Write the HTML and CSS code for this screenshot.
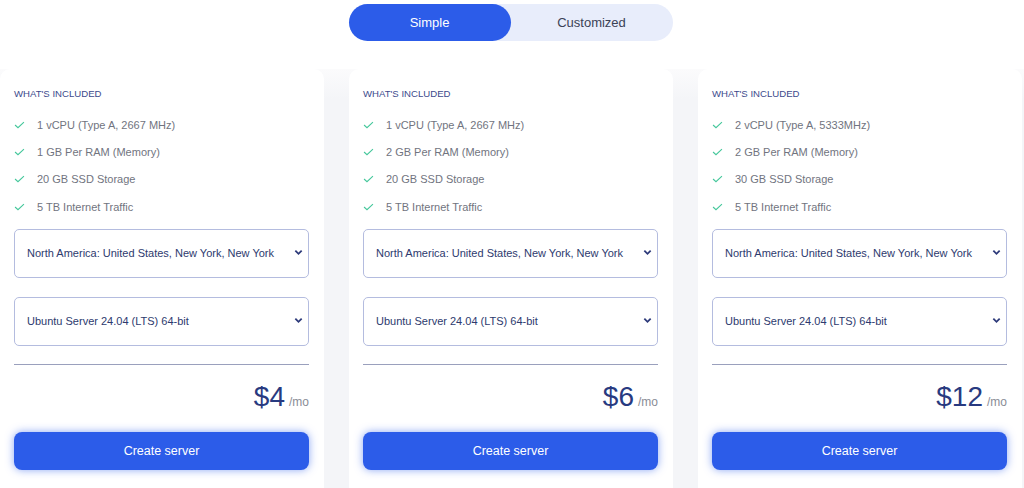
FILE: index.html
```html
<!DOCTYPE html>
<html>
<head>
<meta charset="utf-8">
<link rel="stylesheet" href="styles.css">
</head>
<body>
<div class="toggle-wrap">
  <div class="toggle">
    <div class="tab active">Simple</div>
    <div class="tab">Customized</div>
  </div>
</div>
<div class="cards">
  <div class="card">
    <div class="heading">WHAT'S INCLUDED</div>
    <ul class="features">
      <li><svg class="check" viewBox="0 0 12 9"><path d="M1 4.5 L4.3 7.6 L11 1.2"/></svg>1 vCPU (Type A, 2667 MHz)</li>
      <li><svg class="check" viewBox="0 0 12 9"><path d="M1 4.5 L4.3 7.6 L11 1.2"/></svg>1 GB Per RAM (Memory)</li>
      <li><svg class="check" viewBox="0 0 12 9"><path d="M1 4.5 L4.3 7.6 L11 1.2"/></svg>20 GB SSD Storage</li>
      <li><svg class="check" viewBox="0 0 12 9"><path d="M1 4.5 L4.3 7.6 L11 1.2"/></svg>5 TB Internet Traffic</li>
    </ul>
    <div class="select"><span>North America: United States, New York, New York</span><svg class="chev" viewBox="0 0 10 7"><path d="M1.5 1.5 L5 5 L8.5 1.5"/></svg></div>
    <div class="select"><span>Ubuntu Server 24.04 (LTS) 64-bit</span><svg class="chev" viewBox="0 0 10 7"><path d="M1.5 1.5 L5 5 L8.5 1.5"/></svg></div>
    <div class="divider"></div>
    <div class="price"><span class="amount">$4</span><span class="per">/mo</span></div>
    <div class="btn">Create server</div>
  </div>
  <div class="card">
    <div class="heading">WHAT'S INCLUDED</div>
    <ul class="features">
      <li><svg class="check" viewBox="0 0 12 9"><path d="M1 4.5 L4.3 7.6 L11 1.2"/></svg>1 vCPU (Type A, 2667 MHz)</li>
      <li><svg class="check" viewBox="0 0 12 9"><path d="M1 4.5 L4.3 7.6 L11 1.2"/></svg>2 GB Per RAM (Memory)</li>
      <li><svg class="check" viewBox="0 0 12 9"><path d="M1 4.5 L4.3 7.6 L11 1.2"/></svg>20 GB SSD Storage</li>
      <li><svg class="check" viewBox="0 0 12 9"><path d="M1 4.5 L4.3 7.6 L11 1.2"/></svg>5 TB Internet Traffic</li>
    </ul>
    <div class="select"><span>North America: United States, New York, New York</span><svg class="chev" viewBox="0 0 10 7"><path d="M1.5 1.5 L5 5 L8.5 1.5"/></svg></div>
    <div class="select"><span>Ubuntu Server 24.04 (LTS) 64-bit</span><svg class="chev" viewBox="0 0 10 7"><path d="M1.5 1.5 L5 5 L8.5 1.5"/></svg></div>
    <div class="divider"></div>
    <div class="price"><span class="amount">$6</span><span class="per">/mo</span></div>
    <div class="btn">Create server</div>
  </div>
  <div class="card">
    <div class="heading">WHAT'S INCLUDED</div>
    <ul class="features">
      <li><svg class="check" viewBox="0 0 12 9"><path d="M1 4.5 L4.3 7.6 L11 1.2"/></svg>2 vCPU (Type A, 5333MHz)</li>
      <li><svg class="check" viewBox="0 0 12 9"><path d="M1 4.5 L4.3 7.6 L11 1.2"/></svg>2 GB Per RAM (Memory)</li>
      <li><svg class="check" viewBox="0 0 12 9"><path d="M1 4.5 L4.3 7.6 L11 1.2"/></svg>30 GB SSD Storage</li>
      <li><svg class="check" viewBox="0 0 12 9"><path d="M1 4.5 L4.3 7.6 L11 1.2"/></svg>5 TB Internet Traffic</li>
    </ul>
    <div class="select"><span>North America: United States, New York, New York</span><svg class="chev" viewBox="0 0 10 7"><path d="M1.5 1.5 L5 5 L8.5 1.5"/></svg></div>
    <div class="select"><span>Ubuntu Server 24.04 (LTS) 64-bit</span><svg class="chev" viewBox="0 0 10 7"><path d="M1.5 1.5 L5 5 L8.5 1.5"/></svg></div>
    <div class="divider"></div>
    <div class="price"><span class="amount">$12</span><span class="per">/mo</span></div>
    <div class="btn">Create server</div>
  </div>
</div>
</body>
</html>
```
FILE: styles.css
```css
html, body {
  margin: 0;
  padding: 0;
  background: #ffffff;
  font-family: "Liberation Sans", Arial, sans-serif;
  overflow: hidden;
  height: 488px;
}
.toggle-wrap {
  display: flex;
  justify-content: center;
  padding-top: 4px;
}
.toggle {
  display: flex;
  width: 324px;
  height: 37px;
  margin-left: -3px;
  background: #e8edfb;
  border-radius: 19px;
}
.tab {
  flex: 1;
  display: flex;
  align-items: center;
  justify-content: center;
  font-size: 13px;
  color: #3b4256;
  border-radius: 19px;
}
.tab.active {
  background: #2c5ce9;
  color: #ffffff;
}
.cards {
  display: flex;
  gap: 25px;
  margin-top: 28px;
  padding-right: 2px;
  background: linear-gradient(#fbfbfc, #f4f5f8 30px);
}
.card {
  flex: 0 0 324px;
  background: #ffffff;
  border-radius: 10px 10px 0 0;
  padding: 19px 15px 20px 14px;
  box-sizing: border-box;
  height: 430px;
}
.heading {
  font-size: 9.6px;
  color: #3d4a8c;
  line-height: 11px;
}
.features {
  list-style: none;
  margin: 12px 0 0;
  padding: 0;
}
.features li {
  display: flex;
  align-items: center;
  height: 27.4px;
  font-size: 11px;
  color: #717480;
  white-space: nowrap;
}
.check {
  width: 11px;
  height: 8px;
  margin-right: 12px;
  fill: none;
  stroke: #44c79b;
  stroke-width: 1.2;
}
.select {
  display: flex;
  align-items: center;
  justify-content: space-between;
  height: 49px;
  box-sizing: border-box;
  border: 1px solid #b4bcdf;
  border-radius: 5px;
  padding: 0 5px 1px 12px;
  font-size: 11px;
  color: #2d3a6e;
  margin-top: 8px;
  white-space: nowrap;
}
.select + .select {
  margin-top: 19px;
}
.chev {
  width: 9px;
  height: 7px;
  fill: none;
  stroke: #2d3a7a;
  stroke-width: 2;
}
.divider {
  height: 1px;
  background: #9aa0bd;
  margin-top: 18px;
}
.price {
  display: flex;
  justify-content: flex-end;
  align-items: baseline;
  margin-top: 16px;
  height: 36px;
}
.amount {
  font-size: 28px;
  color: #283a80;
}
.per {
  font-size: 12px;
  color: #8a8d96;
  margin-left: 4px;
}
.btn {
  margin-top: 15px;
  height: 38px;
  border-radius: 8px;
  background: #2c5ce9;
  color: #ffffff;
  font-size: 12.5px;
  display: flex;
  align-items: center;
  justify-content: center;
  box-shadow: 0 0 8px rgba(44, 92, 233, 0.55);
}
```
